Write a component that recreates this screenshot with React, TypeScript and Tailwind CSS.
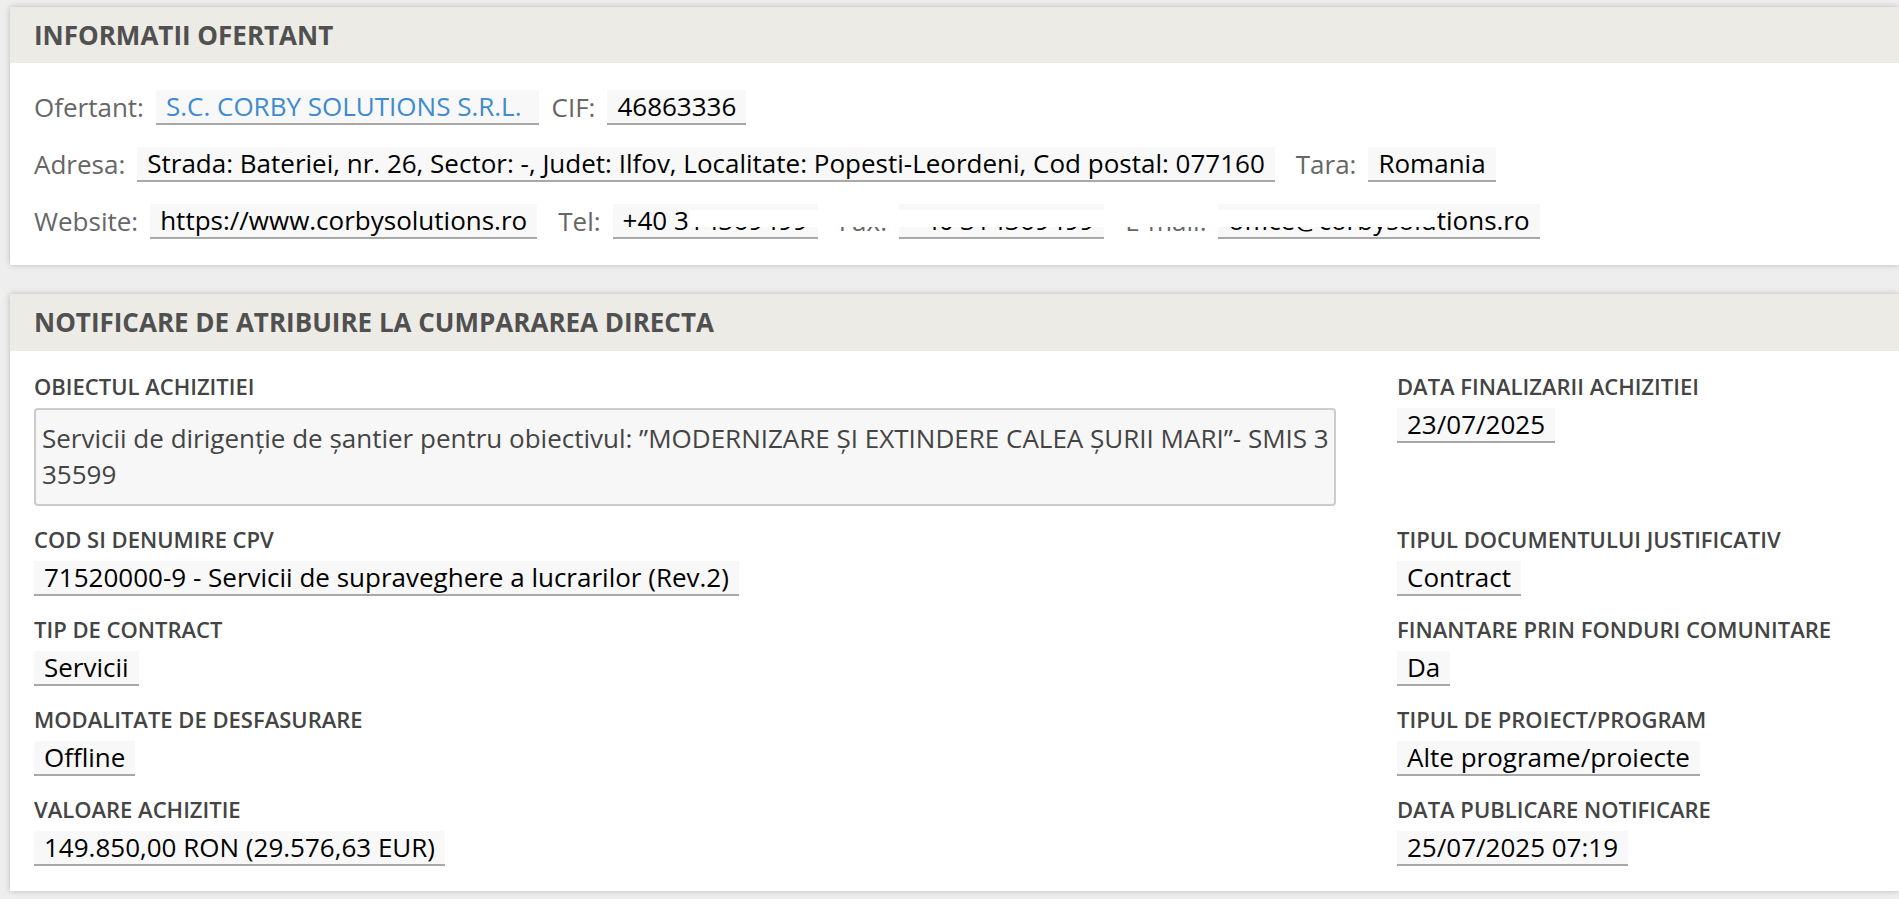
import React from "react";

function Val({
  children,
  color = "text-black",
  extra = "mr-[9px]",
}: {
  children: React.ReactNode;
  color?: string;
  extra?: string;
}) {
  return (
    <span
      className={`inline-flex h-[35px] items-center whitespace-nowrap border-b-2 border-[#a8a8a8] bg-[#f8f8f8] pl-[10px] text-[26px] leading-[33px] ${color} ${extra}`}
    >
      {children}
    </span>
  );
}

function Lbl({ children }: { children: React.ReactNode }) {
  return <span className="whitespace-nowrap text-[26px] leading-[35px] text-[#666]">{children}</span>;
}

function Field({ label, children }: { label: string; children: React.ReactNode }) {
  return (
    <div className="flex flex-col items-start">
      <div className="mb-[9px] h-[26px] whitespace-nowrap text-[22px] font-semibold leading-[26px] text-[#444]">{label}</div>
      {children}
    </div>
  );
}

function V2({ children }: { children: React.ReactNode }) {
  return <Val extra="pr-[10px]">{children}</Val>;
}

export default function App() {
  return (
    <div className="h-screen overflow-hidden bg-[#eeeeee] pl-[10px] pt-[7px] font-['Open_Sans',sans-serif]">
      {/* Panel 1 */}
      <div className="bg-white shadow-[0_0_6px_rgba(0,0,0,0.22)]">
        <div className="flex h-[56px] items-center bg-[#ecebe5] px-[24px] text-[26px] font-bold text-[#505050]">
          INFORMATII OFERTANT
        </div>
        <div className="relative flex flex-col gap-[22px] px-[24px] pb-[26px] pt-[27px]">
          <div className="flex h-[35px] items-center gap-[12px]">
            <Lbl>Ofertant:</Lbl>
            <Val color="text-[#3d8bd0]" extra="pr-[17px] mr-[1px]">
              S.C. CORBY SOLUTIONS S.R.L.
            </Val>
            <Lbl>CIF:</Lbl>
            <Val extra="pr-[10px]">46863336</Val>
          </div>
          <div className="flex h-[35px] items-center gap-[12px]">
            <Lbl>Adresa:</Lbl>
            <Val extra="pr-[10px] mr-[9px]">
              Strada: Bateriei, nr. 26, Sector: -, Judet: Ilfov, Localitate: Popesti-Leordeni, Cod postal: 077160
            </Val>
            <Lbl>Tara:</Lbl>
            <Val extra="pr-[10px]">Romania</Val>
          </div>
          <div className="flex h-[35px] items-center gap-[12px]">
            <Lbl>Website:</Lbl>
            <Val extra="pr-[10px] mr-[9px]">https://www.corbysolutions.ro</Val>
            <Lbl>Tel:</Lbl>
            <Val extra="pr-[10px] mr-[9px]">+40 314369499</Val>
            <Lbl>Fax:</Lbl>
            <Val extra="pr-[10px] mr-[9px]">+40 314369499</Val>
            <Lbl>E-mail:</Lbl>
            <Val extra="pr-[10px]">office@corbysolutions.ro</Val>
          </div>
          {/* redaction overlay */}
          <div className="absolute left-[680px] top-[147px] h-[17px] w-[747px] bg-white" />
        </div>
      </div>

      {/* Panel 2 */}
      <div className="mt-[29px] bg-white shadow-[0_0_6px_rgba(0,0,0,0.22)]">
        <div className="flex h-[57px] items-center bg-[#ecebe5] px-[24px] text-[26px] font-bold text-[#505050]">
          NOTIFICARE DE ATRIBUIRE LA CUMPARAREA DIRECTA
        </div>
        <div className="grid grid-cols-[1302px_1fr] gap-x-[61px] gap-y-[20px] px-[24px] pb-[25px] pt-[22px]">
          <Field label="OBIECTUL ACHIZITIEI">
            <div className="w-full whitespace-nowrap rounded-[4px] border-2 border-[#cccccc] bg-[#f7f7f7] px-[6px] pb-[12px] pt-[10px] text-[26px] leading-[36px] text-[#444]">
              Servicii de dirigenție de șantier pentru obiectivul: ”MODERNIZARE ȘI EXTINDERE CALEA ȘURII MARI”- SMIS 3
              <br />
              35599
            </div>
          </Field>
          <Field label="DATA FINALIZARII ACHIZITIEI">
            <V2>23/07/2025</V2>
          </Field>
          <Field label="COD SI DENUMIRE CPV">
            <V2>71520000-9 - Servicii de supraveghere a lucrarilor (Rev.2)</V2>
          </Field>
          <Field label="TIPUL DOCUMENTULUI JUSTIFICATIV">
            <V2>Contract</V2>
          </Field>
          <Field label="TIP DE CONTRACT">
            <V2>Servicii</V2>
          </Field>
          <Field label="FINANTARE PRIN FONDURI COMUNITARE">
            <V2>Da</V2>
          </Field>
          <Field label="MODALITATE DE DESFASURARE">
            <V2>Offline</V2>
          </Field>
          <Field label="TIPUL DE PROIECT/PROGRAM">
            <V2>Alte programe/proiecte</V2>
          </Field>
          <Field label="VALOARE ACHIZITIE">
            <V2>149.850,00 RON (29.576,63 EUR)</V2>
          </Field>
          <Field label="DATA PUBLICARE NOTIFICARE">
            <V2>25/07/2025 07:19</V2>
          </Field>
        </div>
      </div>
    </div>
  );
}
